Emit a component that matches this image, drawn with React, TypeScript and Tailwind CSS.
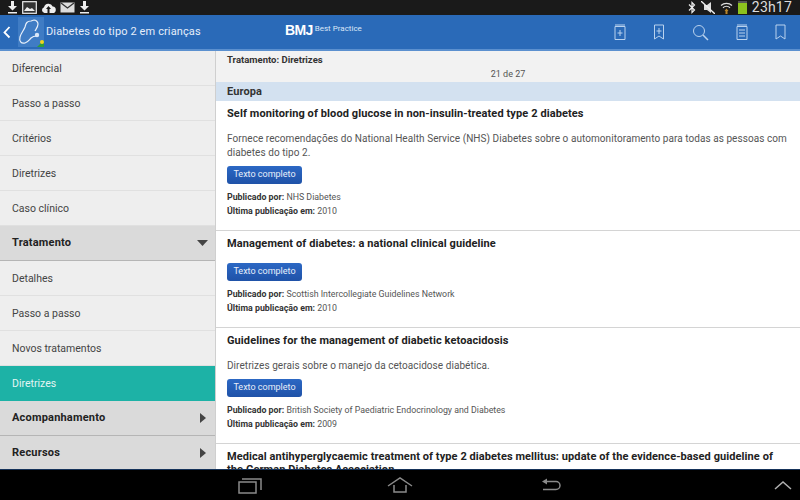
import React from "react";

const sub = (t: string, active = false) => (
  <div key={t} className={`h-[35px] shrink-0 flex items-center pl-[12px] pt-[2px] text-[10.5px] border-b ${active ? "bg-[#1db2a6] text-[#e2f5f3] border-[#1db2a6]" : "bg-[#eeeeee] text-[#444] border-[#e0e0e0]"}`}>{t}</div>
);

const Head = ({ t, open }: { t: string; open?: boolean }) => (
  <div className="h-[35px] shrink-0 flex items-center justify-between pl-[12px] pr-[8px] bg-[#dadada] border-b border-[#b5b5b5] text-[11px] font-bold text-[#222] tracking-[0.2px]">
    <span>{t}</span>
    {open ? (
      <svg width="11" height="6" viewBox="0 0 11 6" className="mr-[-1px]"><path d="M0 0h11L5.5 6z" fill="#444" /></svg>
    ) : (
      <svg width="6" height="10" viewBox="0 0 6 10" className="mr-[1px]"><path d="M0 0l6 5-6 5z" fill="#444" /></svg>
    )}
  </div>
);

const Entry = ({ title, desc, by, year, h }: { title: string; desc?: string; by: string; year: string; h?: string }) => (
  <div className={`px-[11px] pt-[5px] border-b border-[#d4d4d4] bg-white shrink-0 ${h ?? ""}`}>
    <div className="text-[11px] leading-[15px] font-bold text-[#222] tracking-[0.1px]">{title}</div>
    {desc && <div className="mt-[11px] text-[10px] leading-[14px] text-[#555] tracking-[0.06px]">{desc}</div>}
    <div className={`${desc ? "mt-[6px]" : "mt-[12px]"} w-[75px] h-[18px] rounded-[3px] bg-gradient-to-b from-[#2c68c4] to-[#1f52a8] text-[#e8effa] text-[9px] flex items-center justify-center`}>Texto completo</div>
    <div className="mt-[7px] text-[8.8px] leading-[13.5px] text-[#555]"><b className="text-[#333]">Publicado por:</b> {by}</div>
    <div className="text-[8.8px] leading-[13.5px] text-[#555]"><b className="text-[#333]">Última publicação em:</b> {year}</div>
  </div>
);

export default function App() {
  return (
    <div className="w-[800px] h-[500px] flex flex-col overflow-hidden font-['Roboto',sans-serif] bg-black">
      {/* status bar */}
      <div className="h-[15px] shrink-0 bg-[#1a1a1a] flex items-center justify-between pl-[7px] pr-[8px]">
        <div className="flex items-center gap-[4px]">
          <svg width="11" height="13" viewBox="0 0 11 13"><path d="M4 0h3v5h3L5.5 9.5 1 5h3zM1 11h9v1.5H1z" fill="#eee" /></svg>
          <svg width="15" height="13" viewBox="0 0 15 13"><rect x=".7" y=".7" width="13.6" height="11.6" fill="#333" stroke="#eee" strokeWidth="1.2" /><path d="M2 10l3-4 3 2 2-1 3 3z" fill="#eee" /></svg>
          <svg width="15" height="12" viewBox="0 0 15 12"><path d="M3.5 11A3 3 0 0 1 3 5.2 4.6 4.6 0 0 1 11.7 4.6 3.2 3.2 0 0 1 11.5 11z" fill="#eee" /><path d="M7.5 4L5 7h1.5v4h2V7H10z" fill="#1a1a1a" /></svg>
          <svg width="15" height="11" viewBox="0 0 15 11"><rect x=".5" y=".5" width="14" height="10" fill="#ddd" /><path d="M1 1l6.5 5L14 1" fill="none" stroke="#333" strokeWidth="1.3" /></svg>
          <svg width="11" height="13" viewBox="0 0 11 13"><path d="M4 0h3v5h3L5.5 9.5 1 5h3zM1 11h9v1.5H1z" fill="#eee" /></svg>
        </div>
        <div className="flex items-center gap-[5px]">
          <svg width="8" height="13" viewBox="0 0 8 13"><path d="M1 3.5l5.5 5.5L4 11.5V1.5L6.5 4 1 9.5" fill="none" stroke="#eee" strokeWidth="1.2" /></svg>
          <svg width="14" height="13" viewBox="0 0 14 13"><path d="M3 4h3l4-3v11L6 9H3z" fill="#ddd" /><path d="M0 0l14 13" stroke="#eee" strokeWidth="1.3" /></svg>
          <svg width="13" height="13" viewBox="0 0 13 13"><path d="M1 4.500a8 8 0 0 1 11 0M3 6.700a5 5 0 0 1 7 0" fill="none" stroke="#ddd" strokeWidth="1.2" /><path d="M6.500 7.500l2 2.500H7.500v3h-2v-3h-1z" fill="#b8862c" /></svg>
          <div className="w-[9px] h-[13px] bg-[#8cc21e] border-t-[2px] border-[#555]" />
          <span className="text-[14px] leading-[15px] text-[#dddddd] tracking-[0.2px]">23h17</span>
        </div>
      </div>
      {/* header */}
      <div className="h-[36px] shrink-0 bg-[#2a6ab8] border-b-[2px] border-[#5b90cf] flex items-center relative">
        <svg width="8" height="13" viewBox="0 0 8 13" className="ml-[3px]"><path d="M6.500 1L1.500 6.500l5 5" fill="none" stroke="#fff" strokeWidth="1.8" /></svg>
        <div className="w-[26px] h-[30px] ml-[7px] bg-[#3f7cc4] relative overflow-hidden">
          <svg width="26" height="30" viewBox="0 0 26 30" className="absolute inset-0">
            <path d="M13 4c-4 0-5 2-6 6-1 3-4 6-5 10-1 4 1 7 5 6 3-1 4-3 6-5 2-2 4-2 6-2M13 4l3-1c2 0 4 2 4 4 0 3-2 5-3 7" fill="none" stroke="#e8f0fa" strokeWidth="1.2" />
            <circle cx="19" cy="18" r="2.200" fill="#dbe8f8" />
            <path d="M19 30l7-7v7z" fill="#2e9e3a" />
            <circle cx="24" cy="25" r="2" fill="#f3d21f" />
          </svg>
        </div>
        <span className="ml-[2px] text-[11px] text-[#e6eefa] tracking-[0.12px]">Diabetes do tipo 2 em crianças</span>
        <div className="absolute left-[285px] top-[4px] flex items-start">
          <span className="text-[14px] leading-[22px] font-bold text-white font-['Liberation_Sans',sans-serif] tracking-[-0.6px]">BMJ</span>
          <span className="ml-[2px] mt-[3px] text-[8px] leading-[14px] text-[#dbe7f7]">Best Practice</span>
        </div>
        <div className="ml-auto flex items-center gap-[27px] pr-[14px] text-[#b9d2ee]">
          <svg width="12" height="16" viewBox="0 0 12 16" fill="none" stroke="currentColor"><path d="M1 2.500h10v13H1zM1 1h10M6 6v6M3.500 9h5" /></svg>
          <svg width="12" height="16" viewBox="0 0 12 16" fill="none" stroke="currentColor"><path d="M1.500 1h9v14L6 12l-4.500 3zM6 4v6M3.500 7h5" /></svg>
          <svg width="17" height="17" viewBox="0 0 17 17" fill="none" stroke="currentColor"><circle cx="7" cy="7" r="5.500" /><path d="M11 11l5 5" strokeWidth="1.500" /></svg>
          <svg width="12" height="16" viewBox="0 0 12 16" fill="none" stroke="currentColor"><path d="M1 2.500h10v13H1zM1 1h10M3 6h6M3 9h6M3 12h6" /></svg>
          <svg width="11" height="16" viewBox="0 0 11 16" fill="none" stroke="currentColor"><path d="M1 1h9v14l-4.500-3L1 15z" /></svg>
        </div>
      </div>
      {/* main */}
      <div className="h-[419px] shrink-0 flex overflow-hidden border-b border-[#16335a]">
        <div className="w-[215px] shrink-0 flex flex-col bg-[#eeeeee] overflow-hidden">
          {["Diferencial", "Passo a passo", "Critérios", "Diretrizes", "Caso clínico"].map((t) => sub(t))}
          <Head t="Tratamento" open />
          {["Detalhes", "Passo a passo", "Novos tratamentos"].map((t) => sub(t))}
          {sub("Diretrizes", true)}
          <Head t="Acompanhamento" />
          <Head t="Recursos" />
        </div>
        <div className="flex-1 flex flex-col border-l border-[#cfcfcf] overflow-hidden bg-white">
          <div className="h-[31px] shrink-0 bg-[#f2f2f2]">
            <div className="pl-[11px] pt-[3px] text-[9.5px] leading-[12px] font-bold text-[#333]">Tratamento: Diretrizes</div>
            <div className="text-center text-[9px] leading-[12px] mt-[2px] text-[#555]">21 de 27</div>
          </div>
          <div className="h-[19px] shrink-0 bg-[#d3e1f0] pl-[11px] pt-[1px] flex items-center text-[11px] font-bold text-[#333] tracking-[0.1px]">Europa</div>
          <Entry h="h-[130px]" title="Self monitoring of blood glucose in non-insulin-treated type 2 diabetes" desc="Fornece recomendações do National Health Service (NHS) Diabetes sobre o automonitoramento para todas as pessoas com diabetes do tipo 2." by="NHS Diabetes" year="2010" />
          <Entry h="h-[97px]" title="Management of diabetes: a national clinical guideline" by="Scottish Intercollegiate Guidelines Network" year="2010" />
          <Entry h="h-[116px]" title="Guidelines for the management of diabetic ketoacidosis" desc="Diretrizes gerais sobre o manejo da cetoacidose diabética." by="British Society of Paediatric Endocrinology and Diabetes" year="2009" />
          <div className="px-[11px] pt-[6px] text-[11px] leading-[13px] font-bold text-[#222] tracking-[0.08px]">Medical antihyperglycaemic treatment of type 2 diabetes mellitus: update of the evidence-based guideline of the German Diabetes Association</div>
        </div>
      </div>
      {/* nav */}
      <div className="flex-1 bg-black relative flex items-center text-[#8a8a8a]">
        <svg width="24" height="17" viewBox="0 0 24 17" className="absolute left-[238px] top-[7px]" fill="none" stroke="currentColor" strokeWidth="1.500"><rect x="1" y="5" width="17" height="11" /><path d="M4 2h19v11" /></svg>
        <svg width="26" height="16" viewBox="0 0 26 16" className="absolute left-[387px] top-[7px]" fill="none" stroke="currentColor" strokeWidth="1.500"><path d="M1 9l12-8 12 8M7 8v7h12V8" /></svg>
        <svg width="20" height="14" viewBox="0 0 20 14" className="absolute left-[541px] top-[8px]" fill="none" stroke="currentColor" strokeWidth="1.500"><path d="M3 3.500h12a3.800 3.800 0 0 1 0 8H2" /><path d="M6 0.500v6L1 3.500z" fill="currentColor" stroke="none" /></svg>
        <svg width="18" height="9" viewBox="0 0 18 9" className="absolute left-[774px] top-[11px]" fill="none" stroke="#b0b0b0" strokeWidth="1.500"><path d="M1 8l8-7 8 7" /></svg>
      </div>
    </div>
  );
}
